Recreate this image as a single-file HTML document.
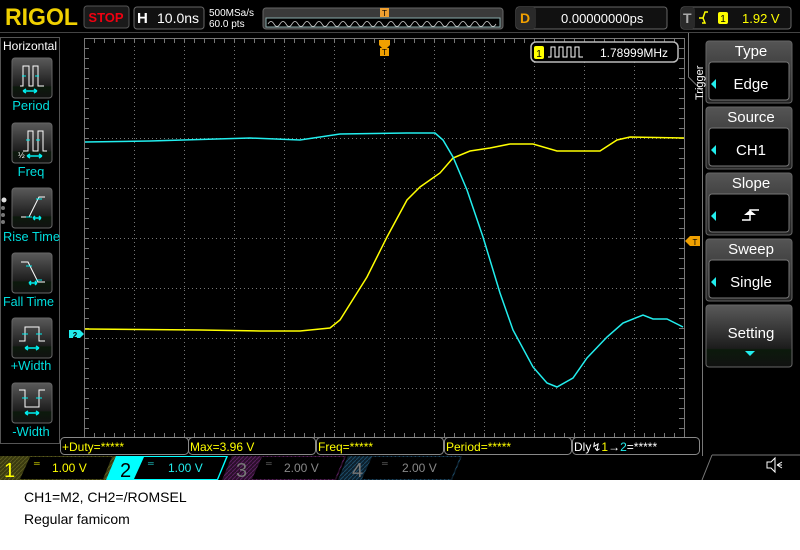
<!DOCTYPE html>
<html><head><meta charset="utf-8"><style>
html,body{margin:0;padding:0;background:#fff;width:800px;height:550px;overflow:hidden}
svg{display:block}
text{font-family:"Liberation Sans",sans-serif}
.cap{position:absolute;left:24px;font:14px "Liberation Sans",sans-serif;color:#000}
</style></head><body>
<svg width="800" height="480" viewBox="0 0 800 480" xmlns="http://www.w3.org/2000/svg">
<defs>
<linearGradient id="btn" x1="0" y1="0" x2="0" y2="1"><stop offset="0" stop-color="#5a5a5a"/><stop offset="0.7" stop-color="#1c1c1c"/><stop offset="0.72" stop-color="#0c1a0c"/><stop offset="1" stop-color="#111"/></linearGradient>
<linearGradient id="rb" x1="0" y1="0" x2="0" y2="1"><stop offset="0" stop-color="#555"/><stop offset="1" stop-color="#222"/></linearGradient>
<pattern id="h1" width="4" height="4" patternUnits="userSpaceOnUse"><rect width="4" height="4" fill="#3a3a10"/><path d="M0 4L4 0" stroke="#5a5a20" stroke-width="1"/></pattern>
<pattern id="h3" width="4" height="4" patternUnits="userSpaceOnUse"><rect width="4" height="4" fill="#2a0f2a"/><path d="M0 4L4 0" stroke="#5a2060" stroke-width="1"/></pattern>
<pattern id="h4" width="4" height="4" patternUnits="userSpaceOnUse"><rect width="4" height="4" fill="#0c1f2c"/><path d="M0 4L4 0" stroke="#1c4a66" stroke-width="1"/></pattern>
</defs>
<rect width="800" height="480" fill="#000"/>
<!-- top bar -->
<text x="5" y="25" font-family="Liberation Serif" font-weight="bold" font-size="24" fill="#f0d000" textLength="73" lengthAdjust="spacingAndGlyphs">RIGOL</text>
<rect x="84" y="6" width="45" height="22" rx="3" fill="#1a1a1a" stroke="#555"/>
<text x="106" y="22" text-anchor="middle" font-weight="bold" font-size="13" fill="#f00010">STOP</text>
<rect x="134" y="7" width="70" height="22" rx="3" fill="#111" stroke="#666"/>
<text x="137" y="23" font-weight="bold" font-size="15" fill="#fff">H</text>
<text x="157" y="23" font-size="14" fill="#fff">10.0ns</text>
<text x="209" y="16" font-size="10" fill="#fff">500MSa/s</text>
<text x="209" y="27" font-size="10" fill="#fff">60.0 pts</text>
<rect x="263" y="8" width="240" height="21" rx="3" fill="#3a3a3a" stroke="#666"/>
<rect x="266" y="18" width="234" height="9" fill="#000" stroke="#8aa"/>
<path d="M268 24 q3 -5 6 0 q3 5 6 0 q3 -5 6 0 q3 5 6 0 q3 -5 6 0 q3 5 6 0 q3 -5 6 0 q3 5 6 0 q3 -5 6 0 q3 5 6 0 q3 -5 6 0 q3 5 6 0 q3 -5 6 0 q3 5 6 0 q3 -5 6 0 q3 5 6 0 q3 -5 6 0 q3 5 6 0 q3 -5 6 0 q3 5 6 0 q3 -5 6 0 q3 5 6 0 q3 -5 6 0 q3 5 6 0 q3 -5 6 0 q3 5 6 0 q3 -5 6 0 q3 5 6 0 q3 -5 6 0 q3 5 6 0 q3 -5 6 0 q3 5 6 0 q3 -5 6 0 q3 5 6 0 q3 -5 6 0 q3 5 6 0 q3 -5 6 0 q3 5 6 0" stroke="#ccc" fill="none" stroke-width="0.8"/>
<rect x="380" y="8" width="9" height="9" fill="#f0a030"/><text x="384.5" y="16" text-anchor="middle" font-size="8" fill="#000">T</text>
<rect x="516" y="7" width="151" height="22" rx="3" fill="#111" stroke="#666"/>
<rect x="516" y="7" width="20" height="22" rx="3" fill="#2a2a2a"/>
<text x="520" y="23" font-weight="bold" font-size="14" fill="#f0a000">D</text>
<text x="561" y="23" font-size="13" fill="#fff">0.00000000ps</text>
<rect x="681" y="7" width="110" height="22" rx="3" fill="#111" stroke="#666"/>
<rect x="681" y="7" width="14" height="22" rx="3" fill="#2a2a2a"/>
<text x="683" y="23" font-weight="bold" font-size="14" fill="#aaa">T</text>
<path d="M699 18h4l2-6h3M703 18l2 5h-3" stroke="#ff0" fill="none" stroke-width="1.5"/>
<rect x="718" y="12" width="10" height="12" rx="2" fill="#ff0"/><text x="723" y="22" text-anchor="middle" font-size="10" fill="#000">1</text>
<text x="742" y="23" font-size="13" fill="#ff0">1.92 V</text>
<line x1="0" y1="32.5" x2="800" y2="32.5" stroke="#444"/>
<!-- left panel -->
<rect x="0.5" y="37.5" width="59" height="406" fill="#000" stroke="#555"/>
<text x="3" y="50" font-size="12" fill="#fff">Horizontal</text>
<g>
<rect x="12" y="58" width="40" height="40" rx="3" fill="url(#btn)" stroke="#666"/>
<path d="M20 86h3v-20h6v20h4v-20h5v20h6" stroke="#fff" fill="none"/><path d="M22 76h4M35 76h4" stroke="#0ee"/><path d="M23 91h14M23 91l3-2M23 91l3 2M37 91l-3-2M37 91l-3 2" stroke="#0ee" stroke-width="1.5"/>
<text x="31" y="110" text-anchor="middle" font-size="13" fill="#0dd">Period</text>
<rect x="12" y="123" width="40" height="40" rx="3" fill="url(#btn)" stroke="#666"/>
<path d="M23 151h5v-20h5v20h5v-20h5v20h4" stroke="#fff" fill="none"/><path d="M26 140h4M36 140h4" stroke="#0ee"/><path d="M27 156h15M27 156l3-2M27 156l3 2M42 156l-3-2M42 156l-3 2" stroke="#0ee" stroke-width="1.5"/><text x="18" y="158" font-size="8" fill="#fff">½</text>
<text x="31" y="176" text-anchor="middle" font-size="13" fill="#0dd">Freq</text>
<rect x="12" y="188" width="40" height="40" rx="3" fill="url(#btn)" stroke="#666"/>
<path d="M21 217h8l10-20h6" stroke="#fff" fill="none"/><path d="M26 217h6M36 199h6" stroke="#0ee"/><path d="M33 218h8M33 218l2-2M33 218l2 2M41 218l-2-2M41 218l-2 2" stroke="#0ee" stroke-width="1.5"/>
<text x="3" y="241" font-size="13" fill="#0dd" textLength="57" lengthAdjust="spacingAndGlyphs">Rise Time</text>
<rect x="12" y="253" width="40" height="40" rx="3" fill="url(#btn)" stroke="#666"/>
<path d="M21 262h7l10 20h7" stroke="#fff" fill="none"/><path d="M26 266h6M36 280h6" stroke="#0ee"/><path d="M29 283h8M29 283l2-2M29 283l2 2M37 283l-2-2M37 283l-2 2" stroke="#0ee" stroke-width="1.5"/>
<text x="3" y="306" font-size="13" fill="#0dd" textLength="51" lengthAdjust="spacingAndGlyphs">Fall Time</text>
<rect x="12" y="318" width="40" height="40" rx="3" fill="url(#btn)" stroke="#666"/>
<path d="M19 341h6v-14h14v14h6" stroke="#fff" fill="none"/><path d="M22 334h6M36 334h6" stroke="#0ee"/><path d="M25 348h14M25 348l3-2M25 348l3 2M39 348l-3-2M39 348l-3 2" stroke="#0ee" stroke-width="1.5"/>
<text x="31" y="370" text-anchor="middle" font-size="13" fill="#0dd">+Width</text>
<rect x="12" y="383" width="40" height="40" rx="3" fill="url(#btn)" stroke="#666"/>
<path d="M19 390h6v17h14v-17h6" stroke="#fff" fill="none"/><path d="M22 398h6M36 398h6" stroke="#0ee"/><path d="M25 413h14M25 413l3-2M25 413l3 2M39 413l-3-2M39 413l-3 2" stroke="#0ee" stroke-width="1.5"/>
<text x="31" y="436" text-anchor="middle" font-size="13" fill="#0dd">-Width</text>
</g>
<circle cx="4" cy="200" r="2.5" fill="#ddd"/><circle cx="3" cy="208" r="2" fill="#777"/><circle cx="3" cy="215" r="2" fill="#777"/><circle cx="3" cy="222" r="2" fill="#777"/>
<!-- grid -->
<g stroke="#777" stroke-width="1" stroke-dasharray="1,3">
<path d="M134.5 38v400M184.5 38v400M234.5 38v400M284.5 38v400M334.5 38v400M434.5 38v400M484.5 38v400M534.5 38v400M584.5 38v400M634.5 38v400"/>
<path d="M84 88.5h600M84 138.5h600M84 188.5h600M84 288.5h600M84 338.5h600M84 388.5h600"/>
<path d="M384.5 38v400M84 238.5h600"/>
</g>
<g stroke="#777">
<path d="M84.5 38v400M84 38.5h600M684.5 38v400M84 437.5h600"/>
<path id="tk" d="M94.5 38v5M104.5 38v5M114.5 38v5M124.5 38v5M134.5 38v5M144.5 38v5M154.5 38v5M164.5 38v5M174.5 38v5M184.5 38v5M194.5 38v5M204.5 38v5M214.5 38v5M224.5 38v5M234.5 38v5M244.5 38v5M254.5 38v5M264.5 38v5M274.5 38v5M284.5 38v5M294.5 38v5M304.5 38v5M314.5 38v5M324.5 38v5M334.5 38v5M344.5 38v5M354.5 38v5M364.5 38v5M374.5 38v5M384.5 38v5M394.5 38v5M404.5 38v5M414.5 38v5M424.5 38v5M434.5 38v5M444.5 38v5M454.5 38v5M464.5 38v5M474.5 38v5M484.5 38v5M494.5 38v5M504.5 38v5M514.5 38v5M524.5 38v5M534.5 38v5M544.5 38v5M554.5 38v5M564.5 38v5M574.5 38v5M584.5 38v5M594.5 38v5M604.5 38v5M614.5 38v5M624.5 38v5M634.5 38v5M644.5 38v5M654.5 38v5M664.5 38v5M674.5 38v5"/>
<use href="#tk" transform="translate(0,395)"/>
<path id="vt" d="M84 48.5h5M84 58.5h5M84 68.5h5M84 78.5h5M84 88.5h5M84 98.5h5M84 108.5h5M84 118.5h5M84 128.5h5M84 138.5h5M84 148.5h5M84 158.5h5M84 168.5h5M84 178.5h5M84 188.5h5M84 198.5h5M84 208.5h5M84 218.5h5M84 228.5h5M84 238.5h5M84 248.5h5M84 258.5h5M84 268.5h5M84 278.5h5M84 288.5h5M84 298.5h5M84 308.5h5M84 318.5h5M84 328.5h5M84 338.5h5M84 348.5h5M84 358.5h5M84 368.5h5M84 378.5h5M84 388.5h5M84 398.5h5M84 408.5h5M84 418.5h5M84 428.5h5"/>
<use href="#vt" transform="translate(595,0)"/>
</g>
<!-- traces -->
<polyline fill="none" stroke="#ff0" stroke-width="1.5" points="85,329 200,330 260,331 300,331 330,328 340,320 367,277 387,237 407,200 420,187 440,173 453,158 470,151 490,148 510,144 533,144 557,151 600,151 617,140 630,137 684,138"/>
<polyline fill="none" stroke="#2ee" stroke-width="1.5" points="85,142 150,141 250,138 300,140 340,134 407,133 435,133 443,140 453,157 467,190 483,237 500,293 513,330 533,367 547,383 557,387 573,378 587,358 607,337 623,323 643,315 653,319 667,319 683,327"/>
<!-- markers -->
<path d="M379 40h11v5l-3 3h-5l-3-3z" fill="#f0a000"/><path d="M380 48h9v8h-9z" fill="#f0a000"/><text x="384.5" y="55" text-anchor="middle" font-size="8" fill="#000">T</text>
<path d="M685 241l5-5h10v10h-10z" fill="#f0a000"/><text x="695" y="245" text-anchor="middle" font-size="8" fill="#000">T</text>
<path d="M69 330h11l4 4-4 4h-11z" fill="#2ee"/><text x="75" y="338" text-anchor="middle" font-size="8" font-weight="bold" fill="#000">2</text>
<!-- freq counter -->
<rect x="531" y="42" width="147" height="20" rx="5" fill="#000" stroke="#bbb" stroke-width="1.5"/>
<rect x="534" y="46" width="10" height="13" rx="2" fill="#ff0"/><text x="539" y="57" text-anchor="middle" font-size="10" fill="#000">1</text>
<path d="M548 57h3v-10h4v10h4v-10h4v10h4v-10h4v10h4v-10h4v10h4" stroke="#fff" fill="none"/>
<text x="600" y="57" font-size="12" fill="#fff">1.78999MHz</text>
<!-- right panel -->
<path d="M688.5 33v44l14 14v365" stroke="#777" fill="none"/>
<text transform="translate(703,100) rotate(-90)" font-size="11" fill="#fff">Trigger</text>
<g font-size="15" fill="#fff" text-anchor="middle">
<rect x="706" y="41" width="86" height="62" rx="3" fill="url(#rb)" stroke="#666"/><text x="751" y="56">Type</text>
<rect x="709" y="62" width="80" height="38" rx="3" fill="#000" stroke="#777"/><text x="751" y="89">Edge</text><path d="M711 84l5-5v10z" fill="#2ee"/>
<rect x="706" y="107" width="86" height="62" rx="3" fill="url(#rb)" stroke="#666"/><text x="751" y="122">Source</text>
<rect x="709" y="128" width="80" height="38" rx="3" fill="#000" stroke="#777"/><text x="751" y="155">CH1</text><path d="M711 150l5-5v10z" fill="#2ee"/>
<rect x="706" y="173" width="86" height="62" rx="3" fill="url(#rb)" stroke="#666"/><text x="751" y="188">Slope</text>
<rect x="709" y="194" width="80" height="38" rx="3" fill="#000" stroke="#777"/><path d="M711 216l5-5v10z" fill="#2ee"/>
<path d="M742 220h8v-10h9" stroke="#fff" fill="none" stroke-width="1.5"/><path d="M744 215h12l-6-5z" fill="#fff"/>
<rect x="706" y="239" width="86" height="62" rx="3" fill="url(#rb)" stroke="#666"/><text x="751" y="254">Sweep</text>
<rect x="709" y="260" width="80" height="38" rx="3" fill="#000" stroke="#777"/><text x="751" y="287">Single</text><path d="M711 282l5-5v10z" fill="#2ee"/>
<rect x="706" y="305" width="86" height="62" rx="3" fill="url(#btn)" stroke="#666"/><text x="751" y="338">Setting</text>
<path d="M745 351h10l-5 5z" fill="#2ee"/>
</g>
<!-- measurement bar -->
<g font-size="11" stroke="#888">
<rect x="60.5" y="437.5" width="128" height="17" rx="4" fill="#000"/>
<rect x="188.5" y="437.5" width="127" height="17" rx="4" fill="#000"/>
<rect x="316.5" y="437.5" width="127" height="17" rx="4" fill="#000"/>
<rect x="444.5" y="437.5" width="127" height="17" rx="4" fill="#000"/>
<rect x="572.5" y="437.5" width="127" height="17" rx="4" fill="#000"/>
</g>
<g font-size="12">
<text x="62" y="451" fill="#ff0">+Duty=*****</text>
<text x="190" y="451" fill="#ff0">Max=3.96 V</text>
<text x="318" y="451" fill="#ff0">Freq=*****</text>
<text x="446" y="451" fill="#ff0">Period=*****</text>
<text x="574" y="451" fill="#fff">Dly<tspan fill="#fff">↯</tspan><tspan fill="#ff0">1</tspan>→<tspan fill="#2ee">2</tspan>=*****</text>
</g>
<!-- channel bar -->
<path d="M0 456h120l-10 24h-110z" fill="url(#h1)"/>
<path d="M30 457h82l-9 22h-83z" fill="#000"/>
<text x="4" y="477" font-size="20" fill="#ff0">1</text>
<text x="34" y="466" font-size="8" fill="#ff0">═</text>
<text x="52" y="472" font-size="12" fill="#ff0">1.00 V</text>
<path d="M116 456h112l-10 24h-112z" fill="#0ff"/>
<path d="M144 457h82l-9 22h-83z" fill="#000"/>
<text x="120" y="477" font-size="20" fill="#000">2</text>
<text x="148" y="466" font-size="8" fill="#2ee">═</text>
<text x="168" y="472" font-size="12" fill="#2ee">1.00 V</text>
<path d="M232 456h114l-10 24h-114z" fill="url(#h3)"/>
<path d="M262 457h82l-9 22h-83z" fill="#000"/>
<text x="236" y="477" font-size="20" fill="#777">3</text>
<text x="266" y="466" font-size="8" fill="#777">═</text>
<text x="284" y="472" font-size="12" fill="#888">2.00 V</text>
<path d="M348 456h114l-10 24h-114z" fill="url(#h4)"/>
<path d="M372 457h88l-9 22h-89z" fill="#000"/>
<text x="352" y="477" font-size="20" fill="#777">4</text>
<text x="382" y="466" font-size="8" fill="#777">═</text>
<text x="402" y="472" font-size="12" fill="#888">2.00 V</text>
<path d="M712 455l-10 25M712 455h88" stroke="#777" fill="none"/>
<path d="M767 462h4l4-4v14l-4-4h-4z" fill="none" stroke="#fff"/><path d="M777 465l5-3M777 465h5M777 465l5 3" stroke="#fff"/>
</svg>
<div class="cap" style="top:489px">CH1=M2, CH2=/ROMSEL</div>
<div class="cap" style="top:511px">Regular famicom</div>
</body></html>
